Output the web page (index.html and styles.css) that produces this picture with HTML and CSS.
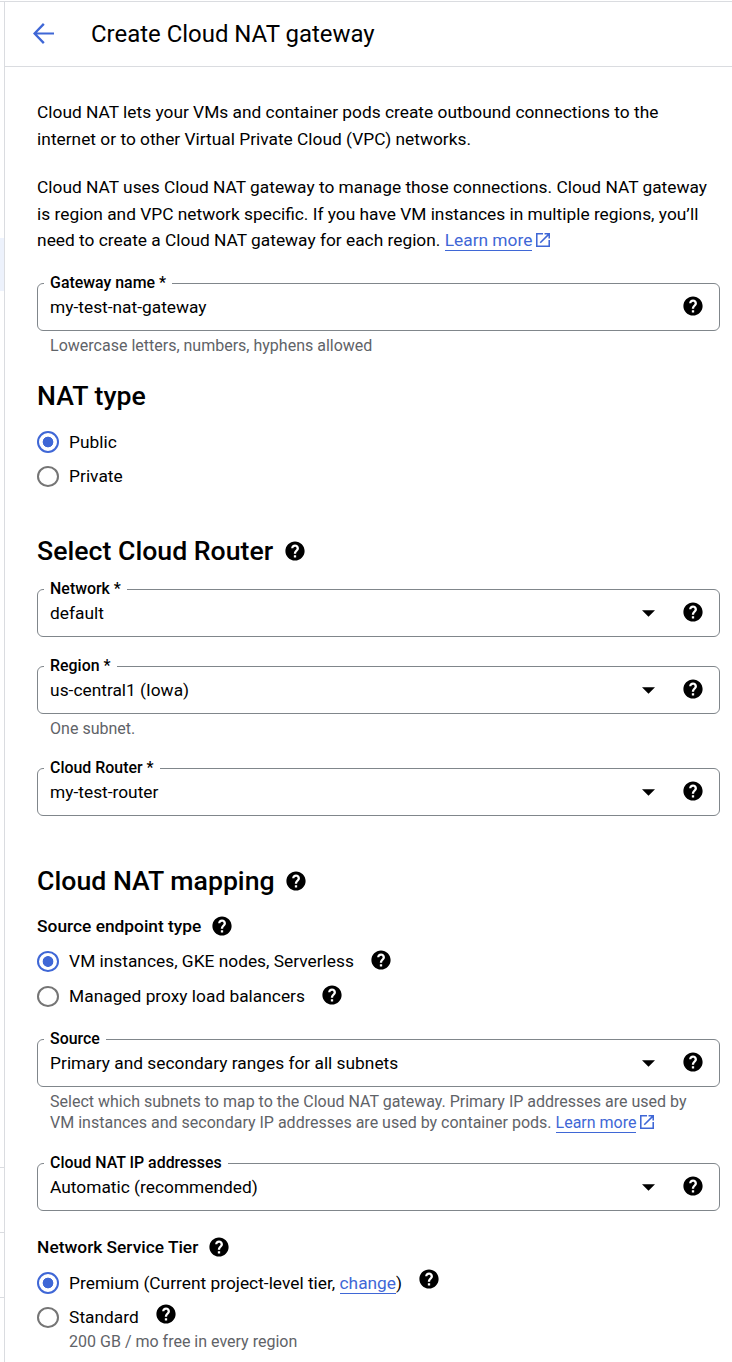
FILE: index.html
```html
<!DOCTYPE html>
<html lang="en">
<head>
<meta charset="utf-8">
<title>Create Cloud NAT gateway</title>
<link rel="stylesheet" href="styles.css">
</head>
<body>
<svg width="0" height="0" class="defs">
  <symbol id="help" viewBox="1.6 1.6 20.8 20.8"><path d="M12 2C6.48 2 2 6.48 2 12s4.48 10 10 10 10-4.48 10-10S17.52 2 12 2zm1.2 16.7h-2.4v-2.4h2.4v2.4zm2-7.2-.9.92c-.8.8-1.1 1.2-1.1 2.5h-2.4v-.5c0-1.1.45-2 1.17-2.73l1.14-1.16c.37-.36.59-.8.59-1.35 0-1-.7-1.7-1.7-1.7s-1.75.75-1.75 1.75H8c0-2.2 1.8-3.9 4-3.9s4.1 1.7 4.1 3.9c0 1-.3 1.7-.9 2.27z"/></symbol>
  <symbol id="ext" viewBox="3 3 18 18"><path d="M19 19H5V5h7V3H3v18h18v-9h-2v7zM14 3v2h3.59l-9.83 9.83 1.41 1.41L19 6.41V10h2V3h-7z"/></symbol>
  <symbol id="caret" viewBox="0 0 14 7"><path d="M0 0h14L7 7z"/></symbol>
</svg>
<div class="app">
  <aside class="rail">
    <div class="rail-active"></div>
    <div class="rail-list"><i></i><i></i><i></i></div>
  </aside>
  <main class="main">
    <header class="header">
      <svg class="back" viewBox="4 4 16 16"><path d="M20 11.2H7.1l5.8-5.9L11.6 4 4 12l7.6 8 1.3-1.3-5.8-5.9H20z"/></svg>
      <h1>Create Cloud NAT gateway</h1>
    </header>
    <div class="content">
      <p class="para">Cloud NAT lets your VMs and container pods create outbound connections to the<br>internet or to other Virtual Private Cloud (VPC) networks.</p>
      <p class="para">Cloud NAT uses Cloud NAT gateway to manage those connections. Cloud NAT gateway<br>is region and VPC network specific. If you have VM instances in multiple regions, you’ll<br>need to create a Cloud NAT gateway for each region. <a class="link">Learn more</a><svg class="ext"><use href="#ext"/></svg></p>

      <div class="field first"><label>Gateway name *</label><span class="value">my-test-nat-gateway</span><svg class="help"><use href="#help"/></svg></div>
      <p class="hint">Lowercase letters, numbers, hyphens allowed</p>

      <h2 class="h-type">NAT type</h2>
      <div class="radios">
        <div class="radio tall"><span class="dot on"></span><span>Public</span></div>
        <div class="radio"><span class="dot"></span><span>Private</span></div>
      </div>

      <h2 class="h-router">Select Cloud Router<svg class="help"><use href="#help"/></svg></h2>
      <div class="field network"><label>Network *</label><span class="value">default</span><svg class="caret"><use href="#caret"/></svg><svg class="help"><use href="#help"/></svg></div>
      <div class="field region"><label>Region *</label><span class="value">us-central1 (Iowa)</span><svg class="caret"><use href="#caret"/></svg><svg class="help"><use href="#help"/></svg></div>
      <p class="hint">One subnet.</p>
      <div class="field router"><label>Cloud Router *</label><span class="value">my-test-router</span><svg class="caret"><use href="#caret"/></svg><svg class="help"><use href="#help"/></svg></div>

      <h2 class="h-mapping">Cloud NAT mapping<svg class="help"><use href="#help"/></svg></h2>
      <h3>Source endpoint type<svg class="help"><use href="#help"/></svg></h3>
      <div class="radios">
        <div class="radio"><span class="dot on"></span><span>VM instances, GKE nodes, Serverless</span><svg class="help raise-s"><use href="#help"/></svg></div>
        <div class="radio"><span class="dot"></span><span>Managed proxy load balancers</span><svg class="help raise-s"><use href="#help"/></svg></div>
      </div>
      <div class="field source"><label>Source</label><span class="value">Primary and secondary ranges for all subnets</span><svg class="caret"><use href="#caret"/></svg><svg class="help"><use href="#help"/></svg></div>
      <p class="hint">Select which subnets to map to the Cloud NAT gateway. Primary IP addresses are used by<br>VM instances and secondary IP addresses are used by container pods. <a class="link">Learn more</a><svg class="ext"><use href="#ext"/></svg></p>
      <div class="field ips"><label>Cloud NAT IP addresses</label><span class="value">Automatic (recommended)</span><svg class="caret"><use href="#caret"/></svg><svg class="help"><use href="#help"/></svg></div>

      <h3 class="h-tier">Network Service Tier<svg class="help"><use href="#help"/></svg></h3>
      <div class="radios">
        <div class="radio tall"><span class="dot on"></span><span>Premium (Current project-level tier, <a class="link">change</a>)</span><svg class="help raise-l"><use href="#help"/></svg></div>
        <div class="radio"><span class="dot"></span><span>Standard</span><svg class="help raise-l"><use href="#help"/></svg></div>
      </div>
      <p class="note">200 GB / mo free in every region</p>
    </div>
  </main>
</div>
</body>
</html>
```
FILE: styles.css
```css
* { box-sizing: border-box; margin: 0; padding: 0; }
html, body { height: 1362px; overflow: hidden; }
body { background: #fff; color: #000; font: 400 17.34px/26.6px Roboto, "Liberation Sans", sans-serif; }
.defs { display: block; position: absolute; }
.app { display: grid; grid-template-columns: 5px 1fr; height: 1362px; padding-top: 1px; }
.rail { border-top: 1px solid #dadce0; border-right: 1px solid #dadce0; }
.rail-active { margin-top: 236px; height: 53px; background: #edf2fc; }
.rail-list { margin-top: 876px; display: grid; gap: 64px; }
.rail-list i { height: 1px; background: #dadce0; }
.main { white-space: nowrap; }
.header { height: 66px; border-top: 1px solid #dadce0; border-bottom: 1px solid #dadce0; display: flex; align-items: center; padding-left: 28px; }
.back { width: 21px; height: 21px; fill: #3f67d6; margin-bottom: 2px; }
h1 { font-size: 23.95px; line-height: 32px; font-weight: 400; margin-left: 37px; }
.content { padding: 32px 12px 0 32.1px; }
.para { height: 53px; margin-bottom: 22px; }
.para + .para { height: 80px; margin-bottom: 29px; }
.link { color: #3f67d6; border-bottom: 1px solid #3f67d6; }
.ext { width: 14px; height: 14px; fill: #3f67d6; margin-left: 3.5px; vertical-align: -1px; }
.help { width: 20px; height: 20px; flex: none; fill: #000; }
.field { position: relative; display: flex; align-items: center; height: 48px; border: 1px solid #80868b; border-radius: 6px; padding: 0 16px 2px 12px; }
.field label { position: absolute; left: 6px; top: -13px; height: 24px; line-height: 24px; padding: 0 6px; background: #fff; font-size: 15.9px; font-weight: 500; }
.field .value { flex: 1; padding-top: 2px; }
.field .caret { width: 13px; height: 7px; margin-right: 28px; margin-top: 2px; }
.hint { margin: 4px 0 0 13px; padding-bottom: 1px; font-size: 16px; line-height: 21px; color: #5f6368; }
h2 { display: flex; align-items: center; height: 36px; font-size: 26.67px; font-weight: 500; }
h2 .help { margin-left: 11.8px; }
h3 { display: flex; align-items: center; height: 26px; font-size: 17.34px; font-weight: 500; }
h3 .help { margin-left: 10.4px; }
.radio { display: flex; align-items: center; height: 35px; }
.dot { width: 22px; height: 21px; border: 2px solid #757575; border-radius: 50%; margin-right: 10px; flex: none; }
.dot.on { border-color: #3f67d6; background: radial-gradient(circle, #3f67d6 5px, transparent 5.7px); }
.tall { padding-top: 1px; }
.tall .dot { height: 22px; }
.radio .help { margin-left: 17px; }
.raise-s { margin-bottom: 3px; }
.raise-l { margin-bottom: 8px; }
.h-type { margin: 21px 0 10px; }
.h-router { margin: 39px 0 20px; }
.region { margin-top: 29px; }
.router { margin-top: 28px; }
.h-mapping { margin: 47px 0 14px; }
h3 + .radios { margin-top: 5px; }
.source { margin-top: 25px; }
.ips { margin-top: 29px; }
.h-tier { margin-top: 23px; }
.note { margin: -4px 0 0 32px; line-height: 21px; font-size: 16px; color: #5f6368; }
```
